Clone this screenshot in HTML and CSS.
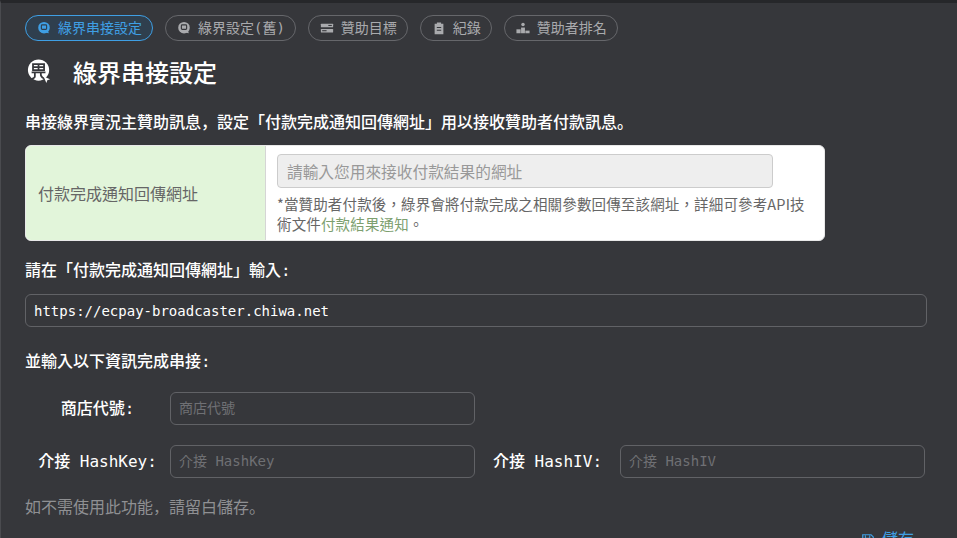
FILE: index.html
```html
<!DOCTYPE html>
<html lang="en">
<head>
<meta charset="utf-8">
<title>綠界串接設定</title>
<link rel="stylesheet" href="styles.css">
</head>
<body>
<main class="page">
  <nav class="tabs">
    <a class="tab tab-active"><svg class="tab-icon" viewBox="0 0 16 16"><circle cx="8" cy="7.600" r="6.600" fill="currentColor"/><rect x="5" y="4.500" width="6" height="5" rx="1" fill="none" stroke="#2f3f4e" stroke-width="1.300"/><path d="M6.500 12.500l6-1.500 1 3z" fill="currentColor"/></svg>綠界串接設定</a>
    <a class="tab"><svg class="tab-icon" viewBox="0 0 16 16"><circle cx="8" cy="7.600" r="6.600" fill="currentColor"/><rect x="5" y="4.500" width="6" height="5" rx="1" fill="none" stroke="#36373b" stroke-width="1.300"/><path d="M6.500 12.500l6-1.500 1 3z" fill="currentColor"/></svg>綠界設定(舊)</a>
    <a class="tab"><svg class="tab-icon" viewBox="0 0 16 16"><rect x="1" y="3" width="14" height="4.200" rx=".6" fill="currentColor"/><rect x="1" y="9" width="14" height="4.200" rx=".6" fill="currentColor"/><rect x="9.500" y="4.500" width="4" height="1.200" fill="#36373b"/><rect x="2.500" y="10.500" width="5" height="1.200" fill="#36373b"/></svg>贊助目標</a>
    <a class="tab"><svg class="tab-icon" viewBox="0 0 16 16"><path d="M3 3.200h2.600V1.800h4.800v1.400H13v12H3z" fill="currentColor"/><path d="M5.500 7.500h5M5.500 10.500h5" stroke="#36373b" stroke-width="1.200"/></svg>紀錄</a>
    <a class="tab"><svg class="tab-icon" viewBox="0 0 16 16"><rect x=".5" y="9.500" width="4.800" height="4.500" fill="currentColor"/><rect x="5.800" y="7.500" width="4.400" height="6.500" fill="currentColor"/><rect x="10.700" y="11" width="4.800" height="3" fill="currentColor"/><circle cx="8" cy="4" r="2" fill="currentColor"/></svg>贊助者排名</a>
  </nav>

  <h1 class="title"><svg class="title-icon" viewBox="0 0 26 26"><circle cx="12.500" cy="12" r="11.500" fill="#fff"/><path d="M6.500 5.500h12v6.500h-12zM6.500 8.700h12M12.500 5.500v6.500M5 14.500h15M8.500 14.500v4.500q0 1.500-3 2.500M15 14.500v3q1 3 5 4" fill="none" stroke="#36373b" stroke-width="1.900"/><path d="M18 19l7 3-3 1-1 3z" fill="#fff"/></svg>綠界串接設定</h1>

  <p class="lead">串接綠界實況主贊助訊息，設定「付款完成通知回傳網址」用以接收贊助者付款訊息。</p>

  <section class="shot" lang="zh-Hant">
    <div class="shot-label">付款完成通知回傳網址</div>
    <div class="shot-body">
      <div class="shot-input">請輸入您用來接收付款結果的網址</div>
      <p class="shot-note">*當贊助者付款後，綠界會將付款完成之相關參數回傳至該網址，詳細可參考API技術文件<span class="shot-link">付款結果通知</span>。</p>
    </div>
  </section>

  <p class="lead lead-url">請在「付款完成通知回傳網址」輸入:</p>
  <input class="field field-url" type="text" value="https://ecpay-broadcaster.chiwa.net" readonly>

  <p class="lead lead-form">並輸入以下資訊完成串接:</p>

  <div class="form-row form-row-first">
    <label class="form-label">商店代號:</label>
    <input class="field field-half" type="text" placeholder="商店代號">
  </div>
  <div class="form-row form-row-second">
    <label class="form-label">介接 HashKey:</label>
    <input class="field field-half" type="text" placeholder="介接 HashKey">
    <label class="form-label">介接 HashIV:</label>
    <input class="field field-half" type="text" placeholder="介接 HashIV">
  </div>

  <p class="hint">如不需使用此功能，請留白儲存。</p>

  <div class="actions">
    <a class="save"><svg class="save-icon" viewBox="0 0 16 16"><path d="M2 2h9.500L14 4.500V14H2z" fill="none" stroke="currentColor" stroke-width="1.400"/><path d="M5 2.500v3.500h5V2.500M5 14v-4h6v4" fill="none" stroke="currentColor" stroke-width="1.200"/></svg>儲存</a>
  </div>
</main>
</body>
</html>
```
FILE: styles.css
```css
* { box-sizing: border-box; }
html, body { margin: 0; height: 100%; overflow: hidden; }
body {
  background: #36373b;
  color: #fff;
  font-family: "DejaVu Sans Mono", "Noto Sans CJK JP", monospace;
  font-size: 14px;
  border-top: 3px solid #26272a;
  border-left: 1px solid #4a4b4f;
}
.page { padding: 12px 30px 0 24px; }

.tabs { display: flex; gap: 12px; }
.tab {
  display: flex;
  align-items: center;
  height: 26px;
  padding: 0 10px 0 11px;
  border: 1px solid #66676b;
  border-radius: 13px;
  color: #a9aaad;
  font-size: 14px;
  line-height: 1;
  white-space: nowrap;
}
.tab-active {
  color: #3f9fe4;
  border-color: #3f9fe4;
  background: #2f3f4e;
}
.tab-icon { width: 14px; height: 14px; margin-right: 7px; flex: none; }

.title {
  display: flex;
  align-items: center;
  margin: 15px 0 0;
  height: 30px;
  font-size: 24px;
  font-weight: 500;
  color: #fff;
}
.title-icon { width: 24px; height: 24px; margin-left: 2px; margin-right: 22px; flex: none; }

.lead { margin: 0; font-size: 16px; font-weight: 500; line-height: 20px; color: #fff; }
.title + .lead { margin-top: 27px; }

.shot {
  display: flex;
  width: 800px;
  height: 96px;
  margin-top: 12px;
  background: #fff;
  border: 1px solid #e8e8e8;
  border-radius: 6px;
  overflow: hidden;
  font-family: "Noto Sans CJK TC", sans-serif;
}
.shot-label {
  display: flex;
  align-items: center;
  width: 240px;
  padding: 0 0 0 12px;
  background: #e2f5da;
  border-right: 1px solid #d5d5d5;
  color: #666;
  font-size: 16px;
  flex: none;
}
.shot-body { flex: 1; padding: 8px 11px 0; }
.shot-input {
  width: 496px;
  height: 34px;
  padding: 0 9px;
  background: #eee;
  border: 1px solid #ccc;
  border-radius: 4px;
  color: #999;
  font-size: 15.700px;
  line-height: 34px;
}
.shot-note { margin: 6px 0 0; color: #666; font-size: 14.500px; letter-spacing: .15px; line-height: 20px; }
.shot-link { color: #7d9f6f; }

.lead-url { margin-top: 20px; }
.field {
  display: block;
  height: 33px;
  padding: 0 8px;
  background: transparent;
  border: 1px solid #616266;
  border-radius: 6px;
  color: #fff;
  font: inherit;
  font-size: 14px;
  outline: none;
}
.field::placeholder { color: #6f7074; opacity: 1; }
.field-url { width: 902px; margin-top: 13px; }
.lead-form { margin-top: 25px; }

.form-row { display: flex; align-items: center; }
.form-row-first { margin-top: 20px; }
.form-row-second { margin-top: 20px; }
.form-label {
  width: 145px;
  padding-bottom: 3px;
  text-align: center;
  font-size: 16px;
  font-weight: 500;
  white-space: nowrap;
  color: #fff;
}
.field-half { width: 305px; padding-bottom: 2px; }

.hint { margin: 20px 0 0; font-size: 16px; line-height: 20px; color: #8f9093; }

.actions { display: flex; justify-content: flex-end; margin-top: 12px; padding-right: 13px; }
.save { display: flex; align-items: center; color: #3f9fe4; font-size: 16px; line-height: 20px; }
.save-icon { width: 14px; height: 14px; margin-right: 7px; }
```
